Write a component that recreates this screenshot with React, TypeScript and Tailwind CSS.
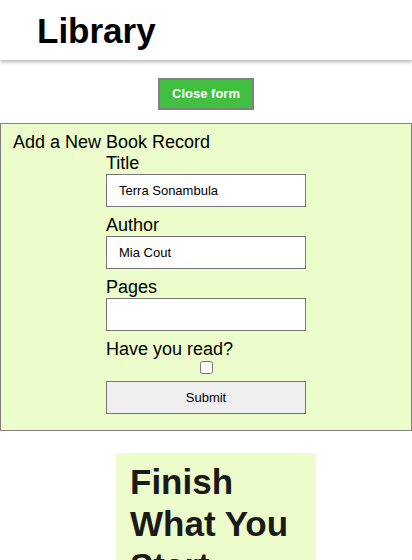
import { useState } from 'react'

const FONT = 'font-["Liberation_Sans",Arial,sans-serif]'

export default function App() {
  const [title, setTitle] = useState('Terra Sonambula')
  const [author, setAuthor] = useState('Mia Cout')
  const [pages, setPages] = useState('')
  const [read, setRead] = useState(false)

  return (
    <div className={`min-h-screen bg-white text-black ${FONT}`}>
      {/* Header */}
      <header className="h-[60px] flex items-center pl-[37px] shadow-[0_2px_4px_rgba(0,0,0,0.3)]">
        <h1 className="text-[35px] font-bold leading-none">Library</h1>
      </header>

      {/* Toggle */}
      <div className="flex justify-center mt-[18px]">
        <button className="w-[96px] h-[32px] bg-[#40bf40] border-2 border-[#808080] text-white text-[13px] font-bold">
          Close form
        </button>
      </div>

      {/* Form */}
      <form
        className="mt-[13px] border border-[#808080] bg-[#ecfccb] pt-[8px] pb-[16px] px-[12px]"
        onSubmit={e => e.preventDefault()}
      >
        <h2 className="text-[18px] leading-[21px]">Add a New Book Record</h2>
        <div className="w-[200px] mx-auto flex flex-col">
          <label className="text-[18px] leading-[21px]">Title</label>
          <input
            value={title}
            onChange={e => setTitle(e.target.value)}
            className="h-[33px] border border-[#767676] bg-white px-[12px] text-[13px] mb-[8px] outline-none"
          />
          <label className="text-[18px] leading-[21px]">Author</label>
          <input
            value={author}
            onChange={e => setAuthor(e.target.value)}
            className="h-[33px] border border-[#767676] bg-white px-[12px] text-[13px] mb-[8px] outline-none"
          />
          <label className="text-[18px] leading-[21px]">Pages</label>
          <input
            value={pages}
            onChange={e => setPages(e.target.value)}
            className="h-[33px] border border-[#767676] bg-white px-[12px] text-[13px] mb-[8px] outline-none"
          />
          <label className="text-[18px] leading-[21px]">Have you read?</label>
          <div className="flex justify-center mt-[1px] mb-[7px] h-[13px]">
            <input
              type="checkbox"
              checked={read}
              onChange={e => setRead(e.target.checked)}
              className="w-[13px] h-[13px] m-0"
            />
          </div>
          <button type="submit" className="h-[33px] border border-[#767676] bg-[#efefef] text-[13px]">
            Submit
          </button>
        </div>
      </form>

      {/* Card */}
      <div className="w-[200px] ml-[116px] mt-[22px] bg-[#ecfccb] pt-[8px] pb-[13px] pl-[14px] pr-[10px]">
        <h3 className="text-[35px] font-bold leading-[42px] text-[#1a1a1a]">Finish What You Start</h3>
      </div>
    </div>
  )
}
